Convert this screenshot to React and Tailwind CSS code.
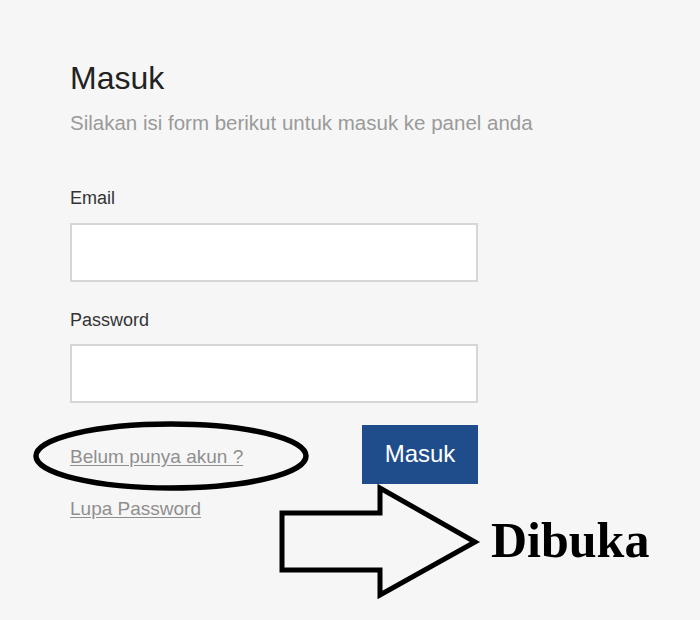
import React from "react";

export default function App() {
  return (
    <div className="relative w-[700px] h-[620px] bg-[#f6f6f6] overflow-hidden" style={{ fontFamily: '"Liberation Sans", Arial, sans-serif' }}>
      <div className="pl-[70px] pt-[62px] w-[478px]">
        <h1 className="text-[32px] leading-none text-[#222] font-normal">Masuk</h1>
        <p className="mt-[19px] text-[20.5px] leading-none text-[#9a9a9a] whitespace-nowrap">Silakan isi form berikut untuk masuk ke panel anda</p>
        <div className="mt-[55px] text-[18px] leading-none text-[#333]">Email</div>
        <div className="mt-[16px] h-[59px] bg-white border-2 border-[#d6d6d6]"></div>
        <div className="mt-[29px] text-[18px] leading-none text-[#333]">Password</div>
        <div className="mt-[15px] h-[59px] bg-white border-2 border-[#d6d6d6]"></div>
        <div className="mt-[22px] flex justify-between items-start">
          <div className="flex flex-col pt-[22px] text-[19px] leading-none text-[#8f8f8f]">
            <a className="underline underline-offset-2">Belum punya akun ?</a>
            <a className="mt-[33px] underline underline-offset-2">Lupa Password</a>
          </div>
          <button className="w-[116px] h-[59px] bg-[#1f4d8b] text-white text-[24px] leading-none">Masuk</button>
        </div>
      </div>

      <svg className="absolute left-0 top-0 pointer-events-none" width="700" height="620" viewBox="0 0 700 620">
        <ellipse cx="171" cy="456" rx="135" ry="32" fill="none" stroke="#000" strokeWidth="5.5" />
        <polygon
          points="282,513 380,513 380,488 475,542 380,595 380,570 282,570"
          fill="none"
          stroke="#000"
          strokeWidth="5"
          strokeLinejoin="miter"
        />
      </svg>
      <div className="absolute left-[491px] top-[515px] text-[50px] leading-none font-bold text-black" style={{ fontFamily: '"Liberation Serif", "Times New Roman", serif' }}>
        Dibuka
      </div>
    </div>
  );
}
